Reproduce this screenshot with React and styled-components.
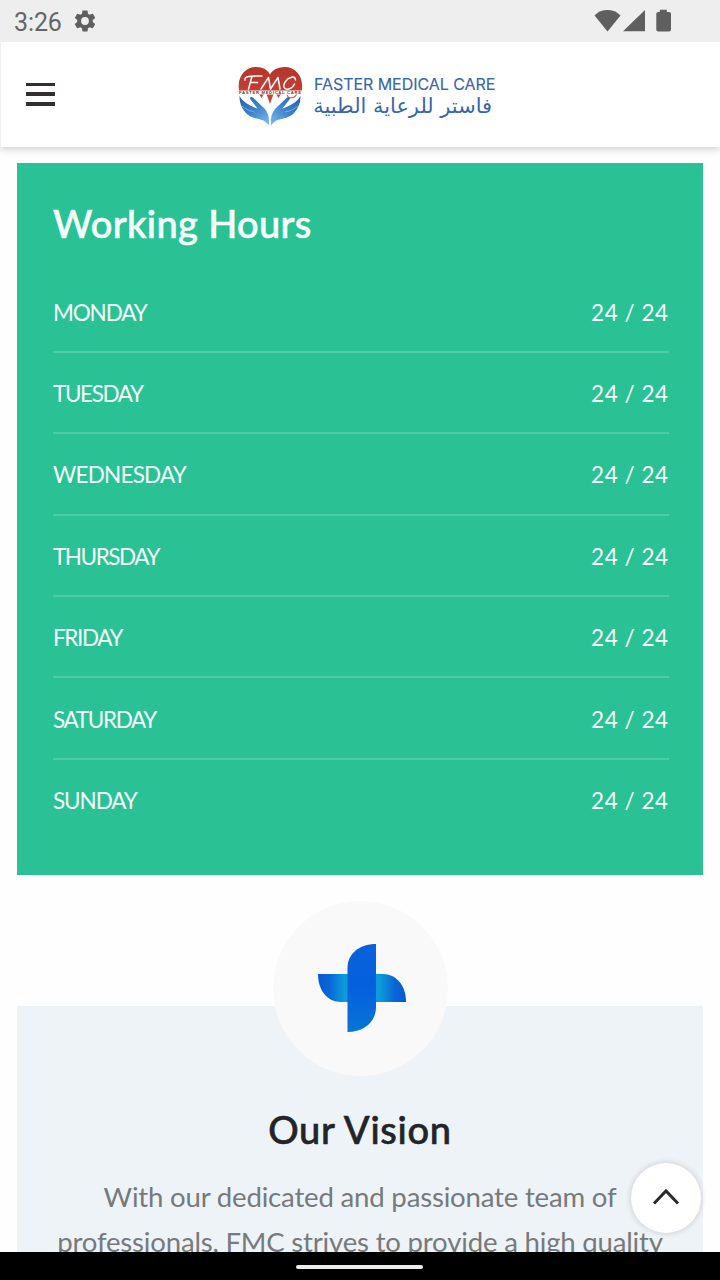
import React from "react";
import styled, { createGlobalStyle } from "styled-components";

const GlobalStyle = createGlobalStyle`
  * { box-sizing: border-box; }
  body { margin: 0; background: #fff; font-family: Lato, "Liberation Sans", sans-serif; }
`;

const Screen = styled.div`
  position: relative;
  width: 720px;
  height: 1280px;
  overflow: hidden;
  display: flex;
  flex-direction: column;
  background: #fefefe;
`;

const StatusBar = styled.div`
  flex: none;
  height: 42px;
  padding: 0 48px 0 14px;
  display: flex;
  justify-content: space-between;
  align-items: center;
  background: #eeeeee;
  color: #666;
`;

const StatusGroup = styled.div`
  display: flex;
  align-items: center;
  gap: ${(p) => p.$gap}px;
`;

const Clock = styled.span`
  font: 400 25px/30px Roboto, sans-serif;
  letter-spacing: -0.1px;
  padding-top: 3px;
`;

const Header = styled.header`
  flex: none;
  height: 105px;
  padding-left: 26px;
  display: flex;
  align-items: center;
  background: #fff;
  border-left: 1px solid #f1f1f1;
  box-shadow: 0 2px 8px rgba(0, 0, 0, 0.2);
  clip-path: inset(0 0 -16px 0);
`;

const MenuButton = styled.button`
  width: 29px;
  height: 23px;
  padding: 0;
  margin: -1px 0 0 -1px;
  border: 0;
  background: none;
  display: flex;
  flex-direction: column;
  justify-content: space-between;
`;

const MenuBar = styled.span`
  height: 3.5px;
  width: 29px;
  background: #332f30;
`;

const Brand = styled.div`
  display: flex;
  align-items: center;
  margin-left: 183px;
  padding-top: 2px;
  gap: 11px;
`;

const BrandNames = styled.div`
  display: flex;
  flex-direction: column;
  width: 178px;
  padding-top: 1px;
  color: #3767ac;
`;

const BrandLatin = styled.span`
  font: 400 16px/20px Inter, sans-serif;
  -webkit-text-stroke: 0.15px currentColor;
  letter-spacing: -0.05px;
  white-space: nowrap;
`;

const BrandArabic = styled.span`
  font: 400 20.9px/25px "DejaVu Sans", sans-serif;
  direction: rtl;
  white-space: nowrap;
`;

const Main = styled.main`
  flex: 1;
  min-height: 0;
  overflow: hidden;
  padding: 16px 17px 0;
`;

const HoursCard = styled.section`
  height: 712px;
  padding: 35px 34.5px 0 36px;
  background: #2ac194;
  color: #f4fffb;
`;

const Title = styled.h2`
  margin: ${(p) => p.$margin};
  font-size: 38px;
  line-height: 50px;
  font-weight: 500;
  -webkit-text-stroke: 0.6px currentColor;
  letter-spacing: ${(p) => p.$track}px;
`;

const HoursRow = styled.div`
  height: 81.4px;
  padding-top: 2px;
  display: flex;
  justify-content: space-between;
  align-items: center;
  font-size: 22.5px;
  border-bottom: 2px solid ${(p) => (p.$last ? "transparent" : "#4dcda6")};
`;

const Day = styled.span`
  letter-spacing: ${(p) => p.$track}px;
`;

const Hours = styled.span`
  letter-spacing: 0.5px;
`;

const VisionCard = styled.section`
  height: 400px;
  margin-top: 131px;
  display: flex;
  flex-direction: column;
  align-items: center;
  background: #eef3f8;
  color: #222427;
`;

const VisionBadge = styled.div`
  flex: none;
  width: 175px;
  height: 175px;
  margin-top: -105px;
  padding: 0 0 2px 3px;
  border-radius: 50%;
  background: #f9f9f9;
  display: flex;
  align-items: center;
  justify-content: center;
`;

const VisionLine = styled.p`
  margin: 0;
  font-size: 27.6px;
  line-height: 45px;
  color: #777a7b;
  white-space: nowrap;
  letter-spacing: ${(p) => p.$track}px;
`;

const ToTop = styled.button`
  position: absolute;
  left: 631px;
  top: 1163px;
  width: 70px;
  height: 70px;
  padding: 0 0 3px;
  border: 0;
  border-radius: 50%;
  background: #fff;
  box-shadow: 0 0 6px rgba(0, 0, 0, 0.18);
  display: flex;
  align-items: center;
  justify-content: center;
`;

const NavBar = styled.div`
  flex: none;
  position: relative;
  height: 28px;
  background: #000;
  display: flex;
  justify-content: center;
  align-items: center;
  padding: 2px 1px 0 0;
`;

const NavPill = styled.span`
  width: 127px;
  height: 4px;
  border-radius: 2px;
  background: #ececec;
`;

const GearIcon = () => (
  <svg width="26" height="26" viewBox="0 0 24 24" fill="#5f5f5f">
    <path d="M19.14 12.94c.04-.3.06-.61.06-.94 0-.32-.02-.64-.07-.94l2.03-1.58a.49.49 0 0 0 .12-.61l-1.92-3.32a.49.49 0 0 0-.59-.22l-2.39.96c-.5-.38-1.03-.7-1.62-.94l-.36-2.54a.48.48 0 0 0-.48-.41h-3.84c-.24 0-.43.17-.47.41l-.36 2.54c-.59.24-1.13.57-1.62.94l-2.39-.96a.48.48 0 0 0-.59.22L2.74 8.87c-.12.21-.08.47.12.61l2.03 1.58c-.05.3-.09.63-.09.94s.02.64.07.94l-2.03 1.58a.49.49 0 0 0-.12.61l1.92 3.32c.12.22.37.29.59.22l2.39-.96c.5.38 1.03.7 1.62.94l.36 2.54c.05.24.24.41.48.41h3.84c.24 0 .44-.17.47-.41l.36-2.54c.59-.24 1.13-.56 1.62-.94l2.39.96c.22.08.47 0 .59-.22l1.92-3.32a.48.48 0 0 0-.12-.61l-2.01-1.58zM12 15.6A3.6 3.6 0 1 1 12 8.4a3.6 3.6 0 0 1 0 7.2z" />
  </svg>
);

const SignalIcons = () => (
  <svg width="78" height="24" viewBox="0 0 78 24" fill="#5f5f5f">
    <path d="M0.5 6.4C7.5-.8 19.3-.8 26.5 6.4L13.5 22.5Z" />
    <path d="M29 22.3 51 1v21.3z" />
    <path d="M66.5.8h7v2.3h2.2c1.2 0 2 .8 2 2v15.5c0 1.2-.8 2-2 2H65c-1.2 0-2-.8-2-2V5.1c0-1.2.8-2 2-2h1.5z" transform="translate(-.7 0)" />
  </svg>
);

const LogoCaption = styled.text`
  font: 700 4.2px "Liberation Sans", sans-serif;
  fill: #5a4048;
`;

const Logo = () => (
  <svg width="65" height="60" viewBox="0 0 65 60">
    <defs>
      <linearGradient id="heart" x1="0" y1="0" x2="0" y2="1">
        <stop offset="0" stopColor="#b3352c" />
        <stop offset="1" stopColor="#c63d32" />
      </linearGradient>
      <linearGradient id="hand" x1="0" y1="0" x2="1" y2="1">
        <stop offset="0" stopColor="#2361a9" />
        <stop offset="0.5" stopColor="#3f83cb" />
        <stop offset="1" stopColor="#7cbdf2" />
      </linearGradient>
      <g id="palm">
        <path d="M1.5 30c0 8 3 14 8 18.500 5 4 11 4 16 6 2 1 4 3 5.500 5 .5-7-.5-12-4-16.500L15.500 32c-2-2-4.500-.5-3 1.500l7 9C12 40 5 36 1.500 30z" fill="url(#hand)" />
        <path d="M4 40c4 3.500 8 5 13 6" fill="none" stroke="#8fbde8" strokeWidth=".7" />
      </g>
    </defs>
    <path d="M1.200 25C-1.500 11 7 1 18 1c7 0 12 3 14 7.500C34 4 40 1 47 1c11 0 19 10 16.800 24Z" fill="url(#heart)" />
    <path d="M21 28h5l-2.500 4zM28.500 28h7L32 38zM38 28h5l-2.500 4z" fill="#c6473d" />
    <g fill="none" stroke="#fff" strokeWidth="1.500" strokeLinecap="round" strokeLinejoin="round">
      <path d="M7 14c-1-4 5-4 17-4M14 10.500 10.500 23M12.500 16.500h7" />
      <path d="M23 23l7.500-11.500 2 11.500L40 11.500 42 23" />
      <path d="M57.500 14c0-5-7-3-10 1.500-3.500 5-1 8.500 3 7.500 3-.5 5-3 6-5" />
    </g>
    <path d="M49 28.500c1 5 8 4 10-1" fill="none" stroke="#cf6258" strokeWidth="1.200" />
    <use href="#palm" />
    <use href="#palm" transform="matrix(-1 0 0 1 64 0)" />
    <path d="M0 24.500h65v4H0z" fill="#fff" />
    <LogoCaption x="1" y="28" textLength="62">FASTER MEDICAL CARE</LogoCaption>
  </svg>
);

const CrossIcon = () => (
  <svg width="90" height="90" viewBox="0 0 90 90">
    <defs>
      <linearGradient id="across" x1="0" y1="0" x2="1" y2="0">
        <stop offset="0" stopColor="#0757d3" />
        <stop offset="0.13" stopColor="#0868d6" />
        <stop offset="0.3" stopColor="#0b9bd8" />
        <stop offset="0.7" stopColor="#0b9bd8" />
        <stop offset="0.87" stopColor="#0868d6" />
        <stop offset="1" stopColor="#0757d3" />
      </linearGradient>
      <linearGradient id="down" x1="0" y1="0" x2="0" y2="1">
        <stop offset="0" stopColor="#0862d9" />
        <stop offset="0.5" stopColor="#0560df" />
        <stop offset="1" stopColor="#0875d5" />
      </linearGradient>
    </defs>
    <path d="M1 31h65c13 0 23 11 23 28H24C10 59 1 47 1 31Z" fill="url(#across)" />
    <path d="M59 1v63c0 14-11 25-28.500 25V25C30.500 11 42 1 59 1Z" fill="url(#down)" />
  </svg>
);

const days = [
  ["MONDAY", -1.15],
  ["TUESDAY", -1.4],
  ["WEDNESDAY", -0.78],
  ["THURSDAY", -1.45],
  ["FRIDAY", -1.4],
  ["SATURDAY", -1.35],
  ["SUNDAY", -1.1],
];

export default function App() {
  return (
    <Screen>
      <GlobalStyle />
      <StatusBar>
        <StatusGroup $gap={10}>
          <Clock>3:26</Clock>
          <GearIcon />
        </StatusGroup>
        <StatusGroup $gap={0}>
          <SignalIcons />
        </StatusGroup>
      </StatusBar>
      <Header>
        <MenuButton aria-label="Menu">
          <MenuBar />
          <MenuBar />
          <MenuBar />
        </MenuButton>
        <Brand>
          <Logo />
          <BrandNames>
            <BrandLatin>FASTER MEDICAL CARE</BrandLatin>
            <BrandArabic lang="ar">فاستر للرعاية الطبية</BrandArabic>
          </BrandNames>
        </Brand>
      </Header>
      <Main>
        <HoursCard>
          <Title $margin="0 0 23.5px" $track={0.35}>Working Hours</Title>
          {days.map(([day, track], i) => (
            <HoursRow key={day} $last={i === days.length - 1}>
              <Day $track={track}>{day}</Day>
              <Hours>24 / 24</Hours>
            </HoursRow>
          ))}
        </HoursCard>
        <VisionCard>
          <VisionBadge>
            <CrossIcon />
          </VisionBadge>
          <Title $margin="28px 0 20px" $track={0.7}>Our Vision</Title>
          <VisionLine $track={-0.2}>With our dedicated and passionate team of</VisionLine>
          <VisionLine $track={-0.2}>professionals, FMC strives to provide a high quality</VisionLine>
        </VisionCard>
      </Main>
      <ToTop aria-label="Back to top">
        <svg width="28" height="18" viewBox="0 0 28 18" fill="none" stroke="#292929" strokeWidth="3">
          <path d="M2 15.500 14 3l12 12.500" />
        </svg>
      </ToTop>
      <NavBar>
        <NavPill />
      </NavBar>
    </Screen>
  );
}
